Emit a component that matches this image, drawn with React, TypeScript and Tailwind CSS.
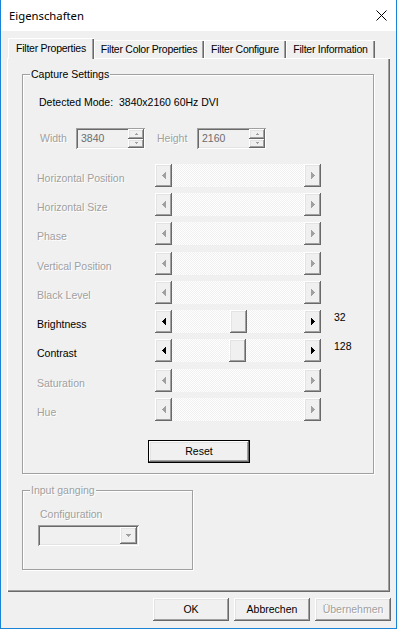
import React from "react";

const raised =
  "shadow-[inset_-1px_-1px_0_#696969,inset_1px_1px_0_#ffffff,inset_-2px_-2px_0_#a0a0a0,inset_2px_2px_0_#e3e3e3]";
const sunken =
  "shadow-[inset_1px_1px_0_#a0a0a0,inset_-1px_-1px_0_#ffffff,inset_2px_2px_0_#696969,inset_-2px_-2px_0_#e3e3e3]";
const disabledText = "text-[#a0a0a0] [text-shadow:1px_1px_0_#ffffff]";

type Dir = "left" | "right" | "up" | "down";

function Tri({ dir, size, color }: { dir: Dir; size: number; color: string }) {
  const rects: { x: number; y: number; w: number; h: number }[] = [];
  const n = size;
  const len = n * 2 - 1;
  for (let i = 0; i < n; i++) {
    const span = 2 * i + 1;
    const off = n - 1 - i;
    if (dir === "left") rects.push({ x: i, y: off, w: 1, h: span });
    if (dir === "right") rects.push({ x: n - 1 - i, y: off, w: 1, h: span });
    if (dir === "up") rects.push({ x: off, y: i, w: span, h: 1 });
    if (dir === "down") rects.push({ x: off, y: n - 1 - i, w: span, h: 1 });
  }
  const horiz = dir === "left" || dir === "right";
  const w = horiz ? n : len;
  const h = horiz ? len : n;
  return (
    <svg width={w} height={h} viewBox={`0 0 ${w} ${h}`} shapeRendering="crispEdges">
      {rects.map((r, i) => (
        <rect key={i} x={r.x} y={r.y} width={r.w} height={r.h} fill={color} />
      ))}
    </svg>
  );
}

function ScrollBtn({ dir, enabled }: { dir: Dir; enabled: boolean }) {
  return (
    <div className={`w-[17px] h-full shrink-0 bg-[#f0f0f0] flex items-center justify-center ${raised}`}>
      <Tri dir={dir} size={4} color={enabled ? "#000000" : "#a0a0a0"} />
    </div>
  );
}

function Slider({ enabled, thumb }: { enabled: boolean; thumb?: number }) {
  return (
    <div className="flex h-[23px] w-[166px] shrink-0">
      <ScrollBtn dir="left" enabled={enabled} />
      <div className="relative flex-1 bg-[image:repeating-conic-gradient(#ffffff_0_25%,#f0f0f0_0_50%)] bg-[length:2px_2px]">
        {thumb !== undefined && (
          <div
            className={`absolute top-0 h-full w-[17px] bg-[#f0f0f0] ${raised}`}
            style={{ left: thumb }}
          />
        )}
      </div>
      <ScrollBtn dir="right" enabled={enabled} />
    </div>
  );
}

function SpinBox({ value }: { value: string }) {
  return (
    <div className={`w-[69px] h-[21px] flex bg-[#f0f0f0] ${sunken}`}>
      <div className="flex-1 pl-[5px] flex items-center text-[#6d6d6d]">{value}</div>
      <div className="flex flex-col w-[17px] py-[1px] pr-[1px] shrink-0">
        <div className={`flex-1 flex items-center justify-center ${raised}`}>
          <Tri dir="up" size={2} color="#a0a0a0" />
        </div>
        <div className={`flex-1 flex items-center justify-center ${raised}`}>
          <Tri dir="down" size={2} color="#a0a0a0" />
        </div>
      </div>
    </div>
  );
}

const rows: { label: string; enabled: boolean; thumb?: number; value?: string; extra?: boolean }[] = [
  { label: "Horizontal Position", enabled: false },
  { label: "Horizontal Size", enabled: false },
  { label: "Phase", enabled: false },
  { label: "Vertical Position", enabled: false, extra: true },
  { label: "Black Level", enabled: false },
  { label: "Brightness", enabled: true, thumb: 58, value: "32" },
  { label: "Contrast", enabled: true, thumb: 57, value: "128" },
  { label: "Saturation", enabled: false, extra: true },
  { label: "Hue", enabled: false },
];

function Tab({ label, active, w }: { label: string; active?: boolean; w: number }) {
  return (
    <div
      className={
        active
          ? "relative h-[21px] -mb-px bg-[#f0f0f0] flex items-start justify-center pt-[4px] shadow-[inset_1px_1px_0_#ffffff,inset_-1px_0_0_#696969,inset_-2px_0_0_#a0a0a0]"
          : "h-[18px] bg-[#f0f0f0] flex items-start justify-center pt-[3px] shadow-[inset_1px_1px_0_#ffffff,inset_-1px_0_0_#696969,inset_-2px_0_0_#a0a0a0]"
      }
      style={{ width: w }}
    >
      <span className="text-[10.5px] leading-[13px] tracking-[-0.25px] whitespace-nowrap">{label}</span>
    </div>
  );
}

function DlgButton({ label, disabled, isDefault, w = 76 }: { label: string; disabled?: boolean; isDefault?: boolean; w?: number }) {
  return (
    <div
      className={`h-[23px] flex items-center justify-center bg-[#f0f0f0] ${
        isDefault
          ? "border border-black shadow-[inset_-1px_-1px_0_#696969,inset_1px_1px_0_#ffffff,inset_-2px_-2px_0_#a0a0a0,inset_2px_2px_0_#e3e3e3]"
          : raised
      } ${disabled ? disabledText : ""}`}
      style={{ width: w }}
    >
      {label}
    </div>
  );
}

export default function App() {
  return (
    <div className="w-[397px] h-[629px] flex flex-col bg-[#f0f0f0] border-x border-b border-[#1883d7] font-['Liberation_Sans',Arial,sans-serif] text-[10.5px] leading-[13px] text-black overflow-hidden">
      {/* Title bar */}
      <div className="h-[31px] bg-white flex items-center justify-between pl-[8px] pr-[9px] shrink-0">
        <span className="font-['Noto_Sans',sans-serif] text-[11.3px] leading-[16px] text-black">Eigenschaften</span>
        <svg width="11" height="11" viewBox="0 0 11 11">
          <path d="M0.5 0.5 L10.5 10.5 M10.5 0.5 L0.5 10.5" stroke="#000" strokeWidth="1" />
        </svg>
      </div>

      {/* Tabs + panel */}
      <div className="pt-[7px] shrink-0">
        <div className="flex items-end h-[20px] ml-[7px] relative z-10">
          <Tab label="Filter Properties" active w={86} />
          <Tab label="Filter Color Properties" w={110} />
          <Tab label="Filter Configure" w={82} />
          <Tab label="Filter Information" w={89} />
        </div>
        <div className="ml-[6px] w-[383px] h-[534px] flex flex-col shadow-[inset_1px_1px_0_#ffffff,inset_-1px_-1px_0_#696969,inset_-2px_-2px_0_#a0a0a0]">
          {/* Capture Settings */}
          <div className="relative mt-[16px] ml-[15px] w-[352px] border border-[#a0a0a0] shadow-[1px_1px_0_#ffffff,inset_1px_1px_0_#ffffff] flex flex-col pt-[21px] pb-[10px]">
            <span className="absolute top-[-7px] left-[7px] px-[1px] bg-[#f0f0f0]">Capture Settings</span>
            <div className="ml-[16px] whitespace-pre">Detected Mode:  3840x2160 60Hz DVI</div>
            <div className="flex items-center mt-[19px] ml-[17px]">
              <span className={`w-[36px] ${disabledText}`}>Width</span>
              <SpinBox value="3840" />
              <span className={`ml-[12px] w-[40px] ${disabledText}`}>Height</span>
              <SpinBox value="2160" />
            </div>
            <div className="flex flex-col mt-[15px] gap-[6px]">
              {rows.map((r) => (
                <div key={r.label} className={`flex items-start ml-[14px] ${r.extra ? "mt-px" : ""}`}>
                  <span className={`w-[118px] mt-[8px] whitespace-nowrap ${r.enabled ? "text-black" : disabledText}`}>
                    {r.label}
                  </span>
                  <Slider enabled={r.enabled} thumb={r.thumb} />
                  {r.value && <span className="ml-[13px] mt-px">{r.value}</span>}
                </div>
              ))}
            </div>
            <div className="mt-[19px] ml-[125px]">
              <DlgButton label="Reset" isDefault w={102} />
            </div>
          </div>

          {/* Input ganging */}
          <div className="relative mt-[16px] ml-[15px] w-[171px] border border-[#a0a0a0] shadow-[1px_1px_0_#ffffff,inset_1px_1px_0_#ffffff] flex flex-col pt-[17px] pb-[23px]">
            <span className={`absolute top-[-7px] left-[7px] px-[1px] bg-[#f0f0f0] ${disabledText}`}>Input ganging</span>
            <div className={`ml-[17px] ${disabledText}`}>Configuration</div>
            <div className={`mt-[4px] ml-[15px] w-[101px] h-[21px] flex justify-end p-[2px] bg-[#f0f0f0] ${sunken}`}>
              <div className={`w-[17px] h-full flex items-center justify-center ${raised}`}>
                <Tri dir="down" size={3} color="#a0a0a0" />
              </div>
            </div>
          </div>
        </div>
      </div>

      {/* Dialog buttons */}
      <div className="flex justify-end gap-[5px] pr-[5px] mt-[6px]">
        <DlgButton label="OK" />
        <DlgButton label="Abbrechen" />
        <DlgButton label="Übernehmen" disabled />
      </div>
    </div>
  );
}
